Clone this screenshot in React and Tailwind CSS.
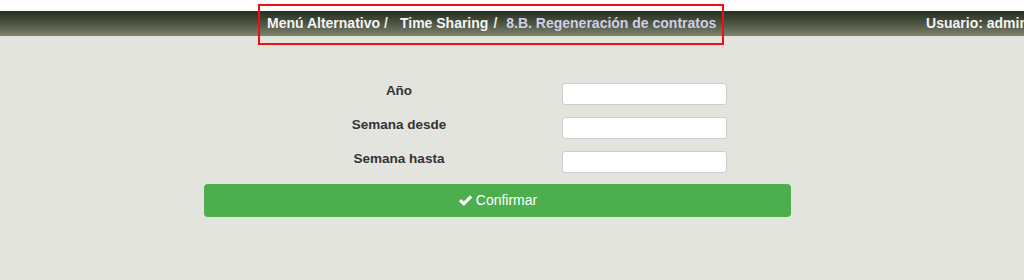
import React from 'react';

const fields = ['Año', 'Semana desde', 'Semana hasta'];

const Header = () => {
  return (
    <div className="bg-white pt-[11px]">
      <div className="flex items-center h-[25px] bg-gradient-to-b from-[#263020] via-[#4c5442] to-[#80846f] text-[14px] font-bold whitespace-nowrap">
        <div className="relative ml-[267px] flex items-center">
          {/* red highlight box drawn over the bar */}
          <span className="absolute left-[-9px] right-[-8px] top-[-9px] bottom-[-11px] border-2 border-[#f01010] pointer-events-none" />
          <span className="text-[#f4f4f4]">Menú Alternativo</span>
          <span className="text-[#e8e8e8] ml-[4px]">/</span>
          <span className="text-[#f4f4f4] ml-[12px]">Time Sharing</span>
          <span className="text-[#e8e8e8] ml-[5px]">/</span>
          <span className="text-[#cfd0e6] ml-[9px]">8.B. Regeneración de contratos</span>
        </div>
        <div className="ml-auto shrink-0 text-[#f4f4f4] mr-[-4px]">Usuario: admin</div>
      </div>
    </div>
  );
};

const App = () => {
  return (
    <div
      className="w-[1024px] h-[280px] bg-[#e4e4df] overflow-hidden"
      style={{ fontFamily: '"Liberation Sans", Arial, Helvetica, sans-serif' }}
    >
      <Header />
      <div className="ml-[204px] w-[587px] pt-[47px]">
        <div className="flex flex-col gap-[12px]">
          {fields.map((label) => (
            <div key={label} className="flex items-start h-[22px]">
              <div className="w-[358px] pl-[32px] text-center text-[13.5px] font-bold text-[#333] leading-[16px]">
                {label}
              </div>
              <input
                type="text"
                className="w-[165px] h-[22px] bg-white border border-[#cccccc] rounded-[3px] outline-none"
              />
            </div>
          ))}
        </div>
        <button className="mt-[11px] w-[587px] h-[33px] bg-[#4cae4c] rounded-[4px] flex items-center justify-center gap-[3px] text-white text-[14px]">
          <svg width="15" height="13" viewBox="0 0 16 13" fill="white">
            <path d="M1 7.2 L3.4 4.8 L6.2 7.6 L12.8 1 L15.2 3.4 L6.2 12.4 Z" />
          </svg>
          <span>Confirmar</span>
        </button>
      </div>
    </div>
  );
};

export default App;
